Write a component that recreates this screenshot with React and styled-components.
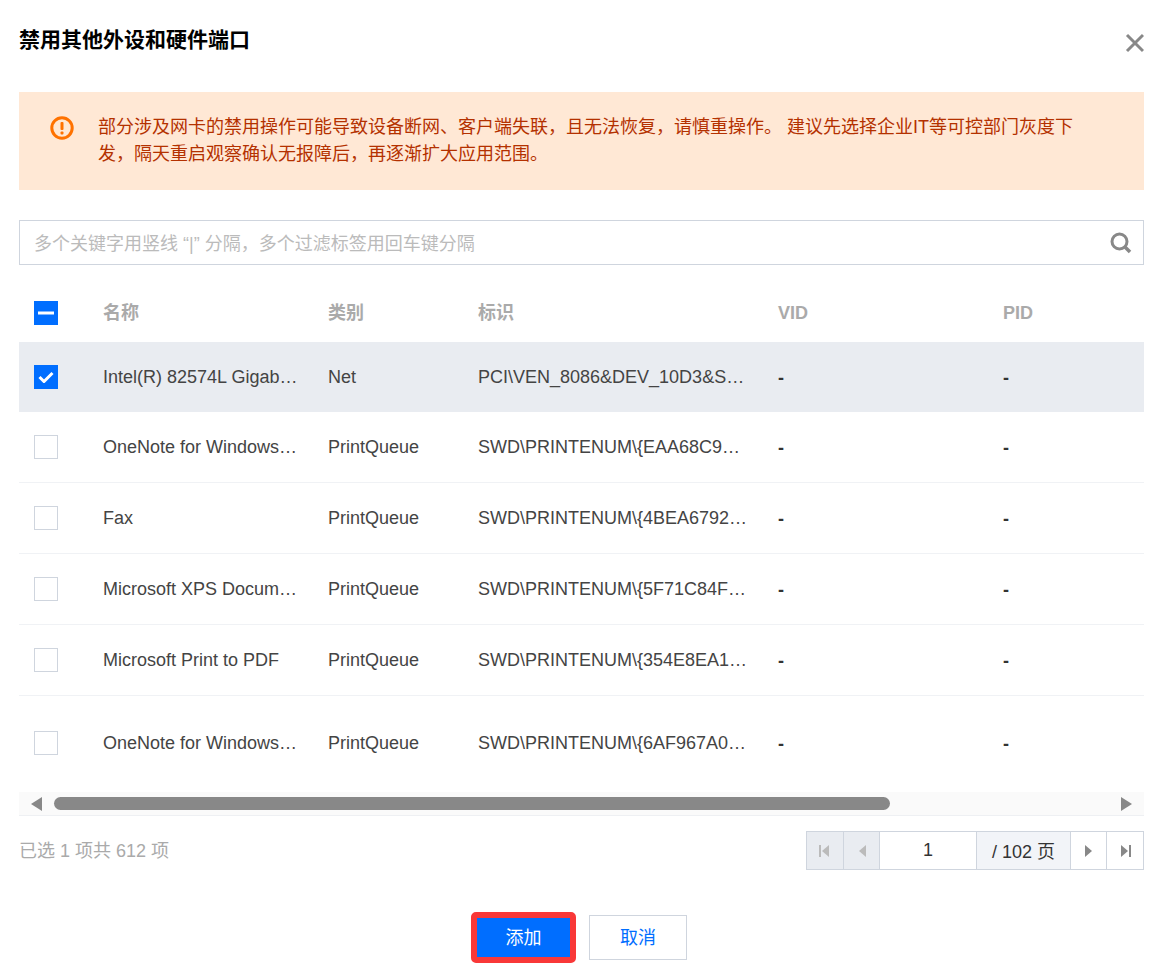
import React from "react";
import styled, { createGlobalStyle } from "styled-components";

const Global = createGlobalStyle`
  html, body { margin: 0; padding: 0; background: #fff; }
  body { width: 1167px; height: 963px; overflow: hidden; font-family: "Liberation Sans", "Noto Sans CJK SC", sans-serif; }
`;

const Dialog = styled.div`
  width: 1167px; height: 963px; box-sizing: border-box; padding: 0 23px 0 19px;
  display: flex; flex-direction: column; color: #333; overflow: hidden;
`;
const Header = styled.header`
  height: 92px; display: flex; justify-content: space-between; align-items: flex-start; flex: none;
`;
const Title = styled.h2`
  margin: 27px 0 0; font-size: 21px; line-height: 26px; font-weight: 700; color: #000;
`;
const CloseButton = styled.button`
  margin: 33px 0 0; padding: 0; border: 0; background: none; width: 20px; height: 20px; display: block;
  svg { display: block; }
`;
const Alert = styled.div`
  height: 98px; box-sizing: border-box; background: #ffe8d5; padding: 22px 70px 0 31px;
  display: flex; gap: 24px; flex: none;
`;
const AlertIcon = styled.svg`
  width: 24px; height: 24px; flex: none; margin-top: 2px;
`;
const AlertText = styled.p`
  margin: 0; font-size: 18px; line-height: 27px; color: #b43100;
`;
const Search = styled.div`
  margin-top: 30px; height: 45px; box-sizing: border-box; border: 1px solid #cfd5de;
  display: flex; align-items: center; justify-content: space-between; padding: 0 10px 0 14px; flex: none;
`;
const Placeholder = styled.span`
  font-size: 18px; color: #bbb; padding-bottom: 2px;
`;
const Table = styled.div`
  margin-top: 25px; display: flex; flex-direction: column; flex: none;
`;
const Row = styled.div`
  display: grid; grid-template-columns: 84px 225px 150px 300px 225px 141px; align-items: center;
  height: ${p => p.$h}px; box-sizing: border-box; padding-bottom: ${p => p.$pb || 0}px;
  background: ${p => (p.$selected ? "#e9ecf1" : "#fff")};
  border-bottom: ${p => (p.$line ? "1px solid #f0f2f5" : "0")};
`;
const HeadCell = styled.div`
  font-size: 18px; line-height: 24px; font-weight: 700; color: #aaa; padding-right: 20px;
`;
const Cell = styled.div`
  font-size: 18px; line-height: 24px; color: #444; padding-right: 29px; white-space: nowrap; overflow: hidden; text-overflow: ellipsis;
`;
const DashCell = styled.div`
  font-size: 18px; line-height: 24px; color: #333; font-weight: 700; padding-top: 2px;
`;
const Box = styled.span`
  margin-left: 15px; width: 24px; height: 24px; box-sizing: border-box; display: flex; align-items: center; justify-content: center;
  background: ${p => (p.$on ? "#006eff" : "#fff")};
  border: ${p => (p.$on ? "0" : "1px solid #cfd5de")};
`;
const Scroller = styled.div`
  height: 24px; margin-top: 2px; background: #fafafa; border-bottom: 1px solid #eef0f3; box-sizing: border-box;
  display: flex; align-items: center; padding: 0 12px 0 12px; flex: none;
`;
const Thumb = styled.div`
  height: 13px; width: 836px; margin-left: 12px; border-radius: 7px; background: #888; flex: none;
`;
const ScrollArrow = styled.svg`
  width: 11px; height: 14px; flex: none; margin-left: ${p => (p.$right ? "auto" : "0")};
`;
const Footer = styled.div`
  margin-top: 15px; display: flex; align-items: center; justify-content: space-between; flex: none;
`;
const Summary = styled.span`
  font-size: 18px; color: #aaa; padding-bottom: 4px;
`;
const Pager = styled.div`
  display: flex; height: 39px; border: 1px solid #cfd5de; box-sizing: border-box;
`;
const PagerBtn = styled.div`
  width: ${p => p.$w || 36}px; display: flex; align-items: center; justify-content: center;
  background: ${p => (p.$disabled ? "#e9ecf1" : "#fff")}; border-right: ${p => (p.$last ? "0" : "1px solid #cfd5de")};
  box-sizing: border-box;
`;
const PageInput = styled.div`
  width: 97px; box-sizing: border-box; border-right: 1px solid #cfd5de; display: flex; align-items: center; justify-content: center;
  font-size: 18px; color: #333;
`;
const PageTotal = styled.div`
  width: 94px; box-sizing: border-box; border-right: 1px solid #cfd5de; background: #f2f4f8; display: flex; align-items: center; justify-content: center;
  font-size: 18px; color: #333; padding-bottom: 1px;
`;
const Actions = styled.div`
  margin-top: 42px; display: flex; justify-content: center; gap: 13px; padding-right: 5px; align-items: center; flex: none;
`;
const Primary = styled.button`
  width: 105px; height: 51px; box-sizing: border-box; border: 6px solid #f93838; border-radius: 5px; background: #006eff;
  background-clip: padding-box; color: #fff; font: inherit; font-size: 18px; padding: 0 0 3px;
`;
const Secondary = styled.button`
  width: 98px; height: 45px; border: 1px solid #cfd5de; background: #fff; color: #006eff; font: inherit; font-size: 18px; padding: 0 0 3px; box-sizing: border-box;
`;

const Tri = ({ dir, color, bar }) => (
  <svg width="14" height="14" viewBox="0 0 14 14">
    {dir === "l" ? <path d="M11 1v12L4 7z" fill={color} /> : <path d="M3 1v12l7-6z" fill={color} />}
    {bar && (dir === "l" ? <rect x="1" y="1" width="2" height="12" fill={color} /> : <rect x="11" y="1" width="2" height="12" fill={color} />)}
  </svg>
);

const rows = [
  { h: 70, sel: true, name: "Intel(R) 82574L Gigabit Network Connection", type: "Net", id: "PCI\\VEN_8086&DEV_10D3&SUBSYS_07D015AD" },
  { h: 71, name: "OneNote for Windows 10", type: "PrintQueue", id: "SWD\\PRINTENUM\\{EAA68C91-1C9F-4A2B}" },
  { h: 71, name: "Fax", type: "PrintQueue", id: "SWD\\PRINTENUM\\{4BEA6792-5A1D-4B7E}" },
  { h: 71, name: "Microsoft XPS Document Writer", type: "PrintQueue", id: "SWD\\PRINTENUM\\{5F71C84F-90BD-4C1E}" },
  { h: 71, name: "Microsoft Print to PDF", type: "PrintQueue", id: "SWD\\PRINTENUM\\{354E8EA1-3F0C-4D6A}" },
  { h: 94, last: true, name: "OneNote for Windows 8.1", type: "PrintQueue", id: "SWD\\PRINTENUM\\{6AF967A0-2B8E-4E3F}" },
];

export default function App() {
  return (
    <Dialog>
      <Global />
      <Header>
        <Title>禁用其他外设和硬件端口</Title>
        <CloseButton aria-label="关闭">
          <svg width="20" height="20" viewBox="0 0 20 20">
            <path d="M3 2l16 16M19 2L3 18" stroke="#888" strokeWidth="3" fill="none" />
          </svg>
        </CloseButton>
      </Header>
      <Alert>
        <AlertIcon viewBox="0 0 24 24">
          <circle cx="12" cy="12" r="10.2" fill="none" stroke="#ff7200" strokeWidth="3" />
          <rect x="10.5" y="6" width="3" height="8" rx="1" fill="#ff7200" />
          <rect x="10.5" y="15.4" width="3" height="3" rx="1" fill="#ff7200" />
        </AlertIcon>
        <AlertText>
          部分涉及网卡的禁用操作可能导致设备断网、客户端失联，且无法恢复，请慎重操作。 建议先选择企业IT等可控部门灰度下发，隔天重启观察确认无报障后，再逐渐扩大应用范围。
        </AlertText>
      </Alert>
      <Search>
        <Placeholder>多个关键字用竖线 “|” 分隔，多个过滤标签用回车键分隔</Placeholder>
        <svg width="24" height="24" viewBox="0 0 24 24">
          <circle cx="10.5" cy="10.5" r="7.5" fill="none" stroke="#888" strokeWidth="3" />
          <path d="M16 16l5 5" stroke="#888" strokeWidth="3.6" />
        </svg>
      </Search>
      <Table>
        <Row $h={52} $pb={6}>
          <Box $on>
            <svg width="16" height="4" viewBox="0 0 16 4"><rect width="16" height="3" y="0.5" fill="#fff" /></svg>
          </Box>
          <HeadCell>名称</HeadCell>
          <HeadCell>类别</HeadCell>
          <HeadCell>标识</HeadCell>
          <HeadCell>VID</HeadCell>
          <HeadCell>PID</HeadCell>
        </Row>
        {rows.map(r => (
          <Row key={r.id} $h={r.h} $selected={r.sel} $line={!r.last && !r.sel}>
            <Box $on={r.sel}>
              {r.sel && (
                <svg width="16" height="12" viewBox="0 0 16 12">
                  <path d="M1.5 6l4.5 4.5L14.5 2" fill="none" stroke="#fff" strokeWidth="3" />
                </svg>
              )}
            </Box>
            <Cell>{r.name}</Cell>
            <Cell>{r.type}</Cell>
            <Cell>{r.id}</Cell>
            <DashCell>-</DashCell>
            <DashCell>-</DashCell>
          </Row>
        ))}
      </Table>
      <Scroller>
        <ScrollArrow viewBox="0 0 11 14"><path d="M11 0v14L0 7z" fill="#888" /></ScrollArrow>
        <Thumb />
        <ScrollArrow $right viewBox="0 0 11 14"><path d="M0 0v14l11-7z" fill="#888" /></ScrollArrow>
      </Scroller>
      <Footer>
        <Summary>已选 1 项共 612 项</Summary>
        <Pager>
          <PagerBtn $disabled $w={37}><Tri dir="l" color="#bbb" bar /></PagerBtn>
          <PagerBtn $disabled $w={36}><Tri dir="l" color="#bbb" /></PagerBtn>
          <PageInput>1</PageInput>
          <PageTotal>/ 102 页</PageTotal>
          <PagerBtn><Tri dir="r" color="#888" /></PagerBtn>
          <PagerBtn $last><Tri dir="r" color="#888" bar /></PagerBtn>
        </Pager>
      </Footer>
      <Actions>
        <Primary>添加</Primary>
        <Secondary>取消</Secondary>
      </Actions>
    </Dialog>
  );
}
